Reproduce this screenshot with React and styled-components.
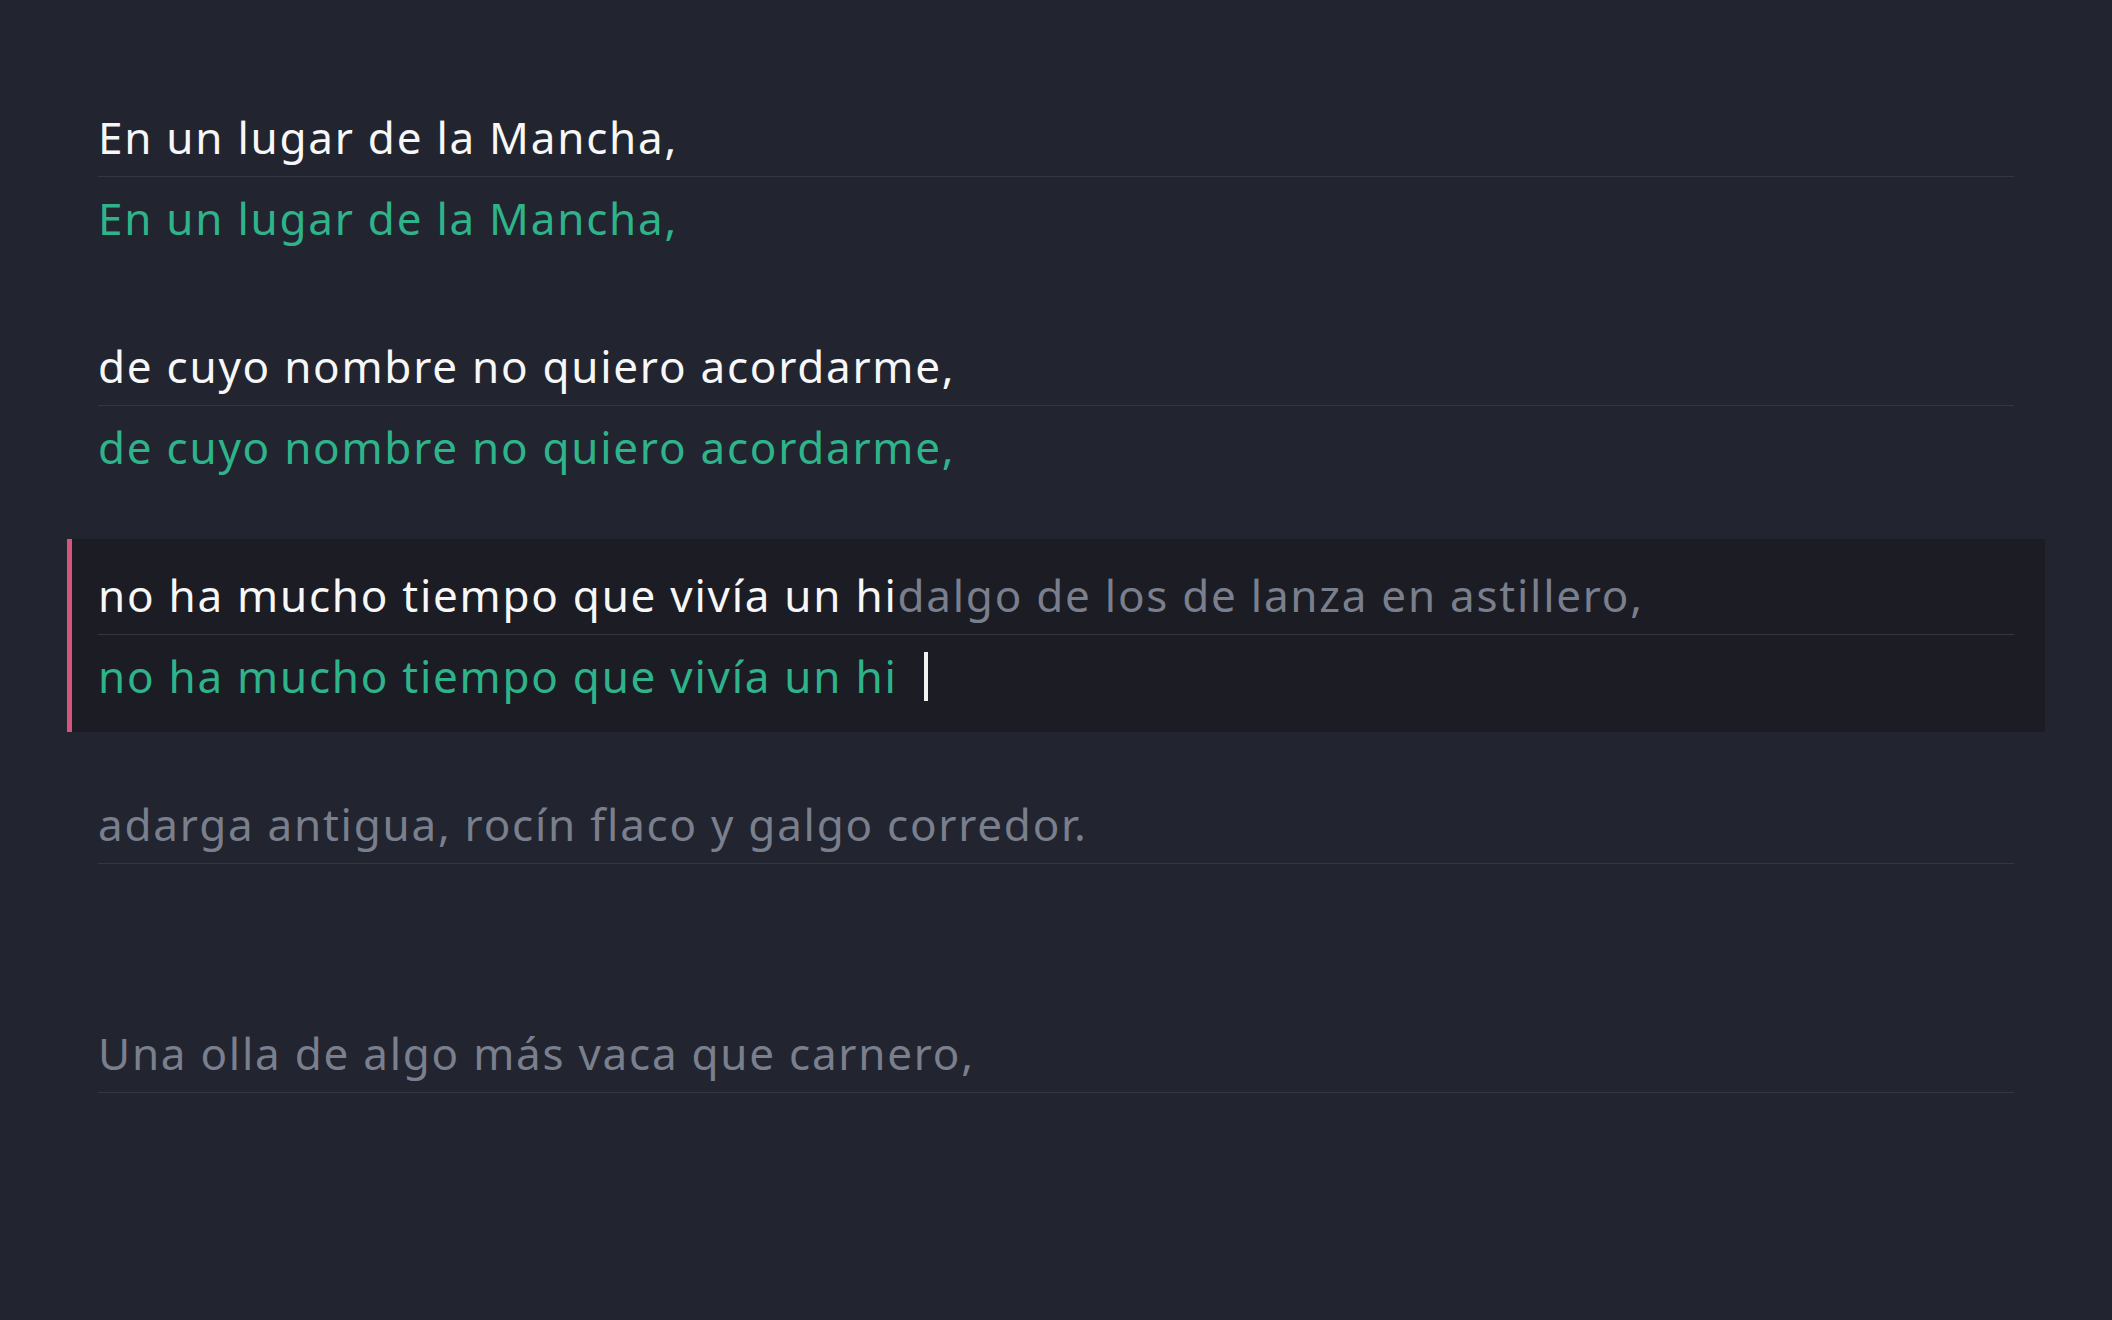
import React from 'react';
import styled, { createGlobalStyle } from 'styled-components';

const GlobalStyle = createGlobalStyle`
  html, body {
    margin: 0;
    padding: 0;
    background: #22252f;
  }
  body {
    font-family: "Noto Sans", "Open Sans", sans-serif;
  }
`;

const Page = styled.div`
  box-sizing: border-box;
  min-height: 1320px;
  padding: 81px 67px 0 67px;
  display: flex;
  flex-direction: column;
  gap: 36px;
`;

const Block = styled.div`
  box-sizing: border-box;
  height: 193px;
  padding: 26px 31px 0 26px;
  border-left: 5px solid ${({ active }) => (active ? '#d6557f' : 'transparent')};
  background: ${({ active }) => (active ? '#1c1d24' : 'transparent')};
`;

const Line = styled.div`
  font-size: 44px;
  line-height: 60px;
  letter-spacing: 1.75px;
  white-space: pre;
  color: ${({ tone }) => tone};
`;

const SourceLine = styled(Line)`
  padding-bottom: 9px;
  border-bottom: 1px solid #343742;
`;

const InputLine = styled(Line)`
  margin-top: 11px;
  display: flex;
  align-items: center;
`;

const Pending = styled.span`
  color: #7a7f8e;
`;

const Caret = styled.span`
  display: inline-block;
  width: 4px;
  height: 49px;
  margin-left: 13px;
  background: #f2f2f2;
`;

const lines = [
  { text: 'En un lugar de la Mancha,', typed: 'En un lugar de la Mancha,' },
  { text: 'de cuyo nombre no quiero acordarme,', typed: 'de cuyo nombre no quiero acordarme,' },
  { text: 'no ha mucho tiempo que vivía un hidalgo de los de lanza en astillero,', typed: 'no ha mucho tiempo que vivía un hi ', active: true },
  { text: 'adarga antigua, rocín flaco y galgo corredor.', typed: null },
  { text: 'Una olla de algo más vaca que carnero,', typed: null },
];

const Row = ({ text, typed, active }) => {
  let done = '';
  if (typed != null) {
    const t = typed.trimEnd();
    done = text.startsWith(t) ? t : '';
  }
  const rest = text.slice(done.length);
  return (
    <Block active={active}>
      <SourceLine tone="#f7f7f8">
        {done}
        {rest && <Pending>{rest}</Pending>}
      </SourceLine>
      <InputLine tone="#2fb38a">
        {typed}
        {active && <Caret />}
      </InputLine>
    </Block>
  );
};

export default function App() {
  return (
    <>
      <GlobalStyle />
      <Page>
        {lines.map((l, i) => (
          <Row key={i} {...l} />
        ))}
      </Page>
    </>
  );
}
